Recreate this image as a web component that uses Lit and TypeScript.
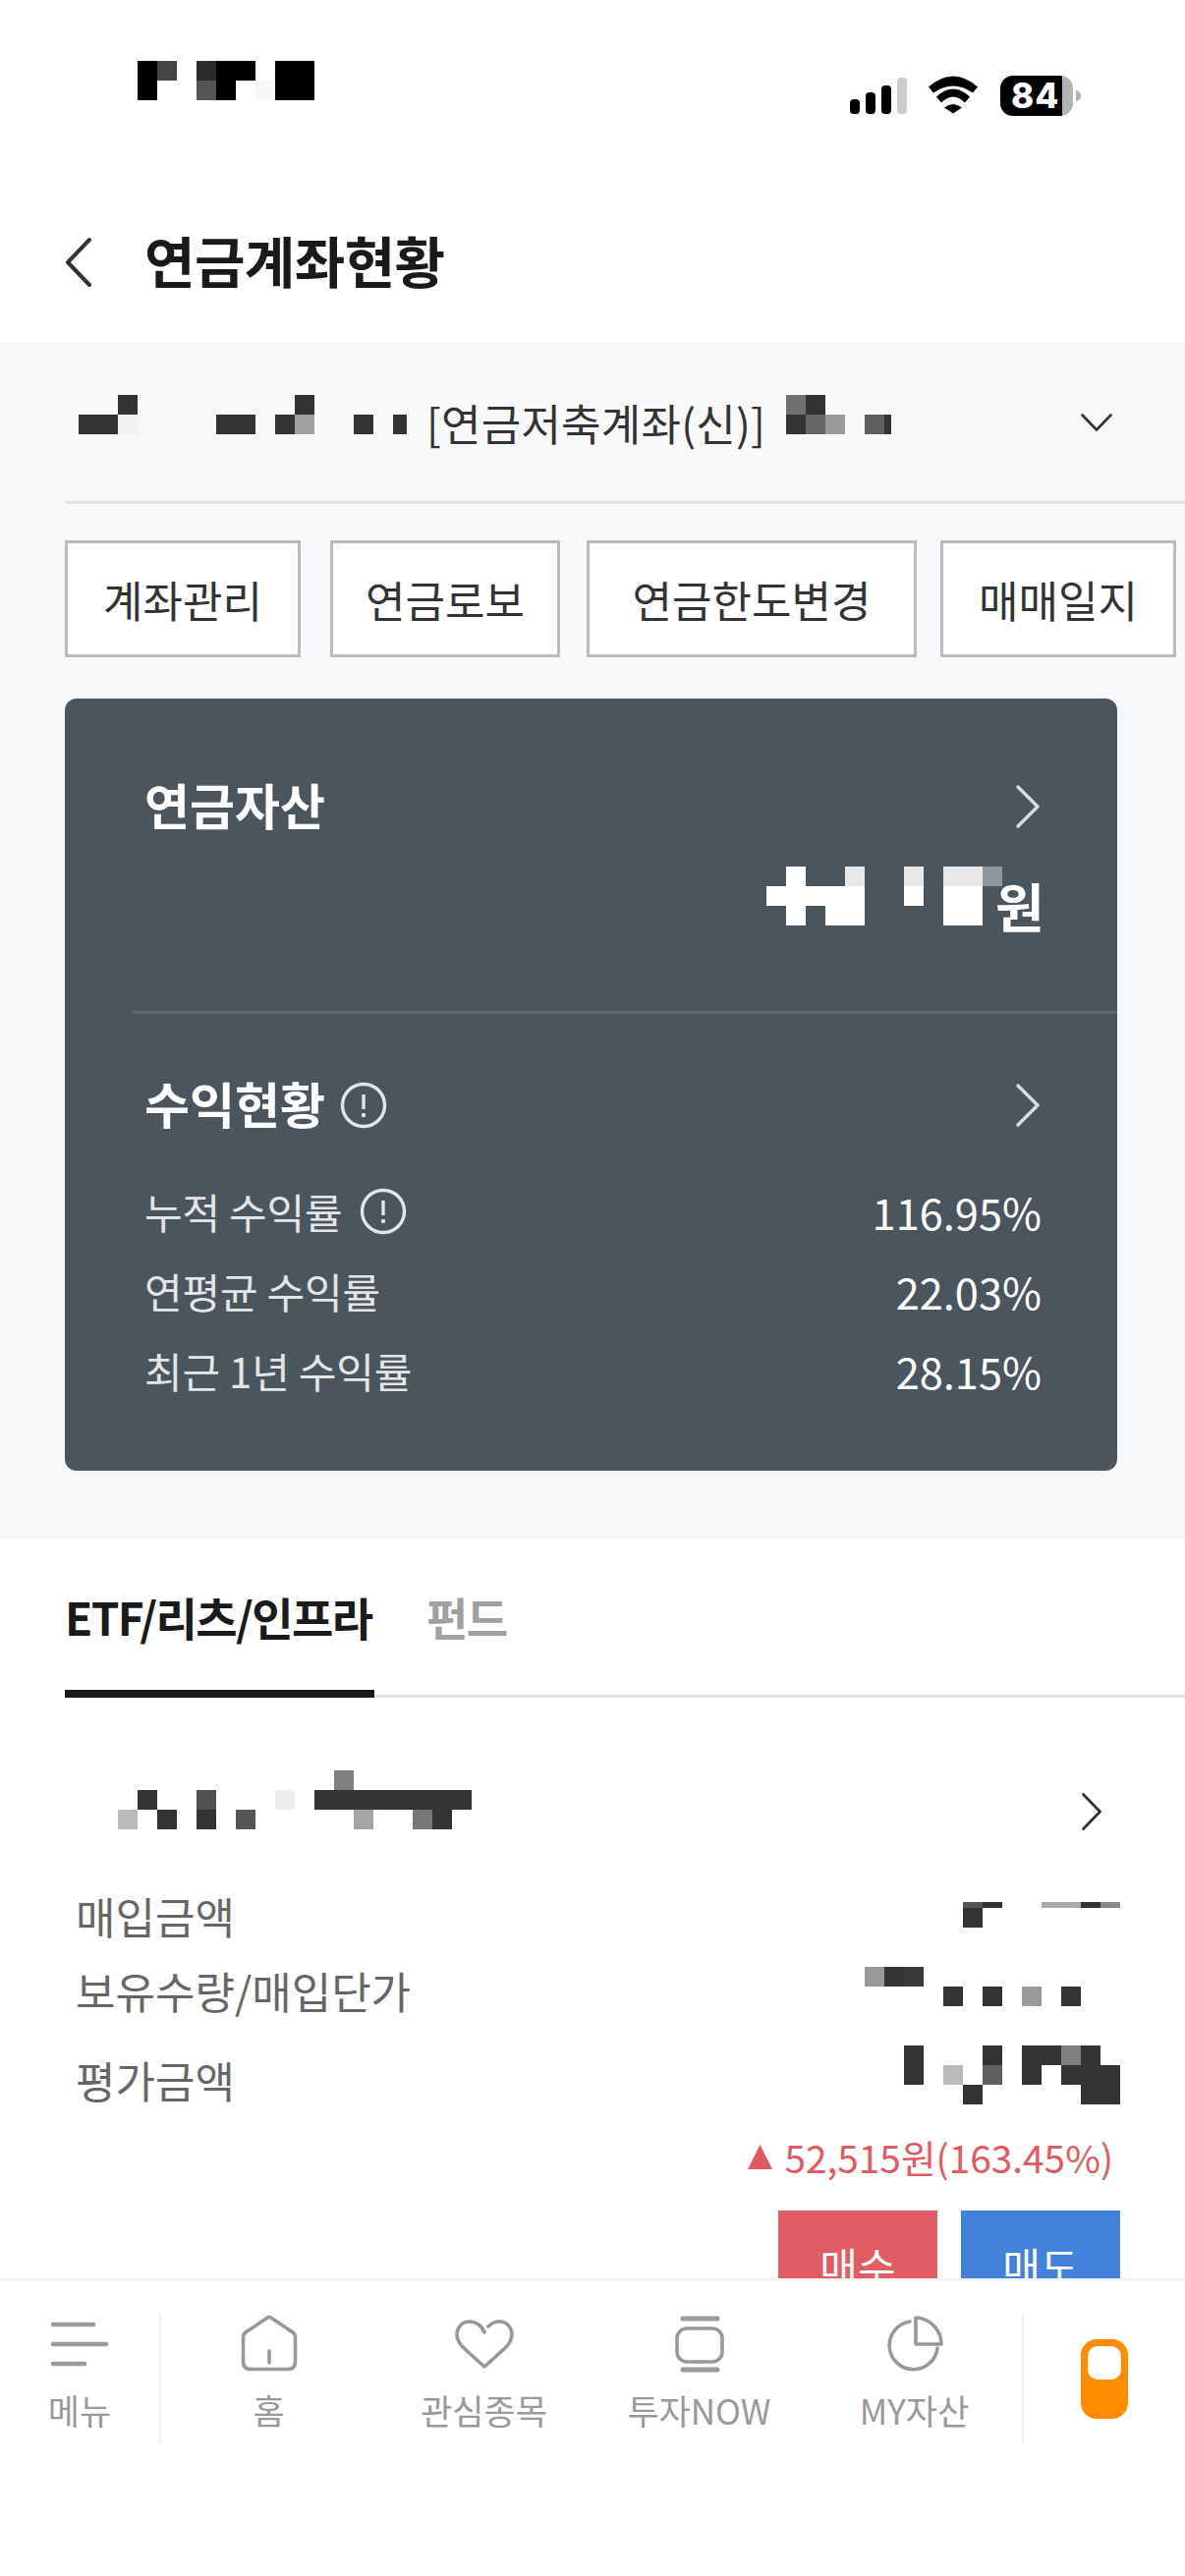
import { LitElement, html, css, svg } from "lit";
import { customElement } from "lit/decorators.js";

type Cell = [number, number, number, string]; // col, row, col span, colour

const D = "#333335";

function mosaic(width: number, height: number, cells: Cell[], unit = 20) {
  return html`<svg class="mosaic" width=${width} height=${height} viewBox="0 0 ${width} ${height}" shape-rendering="crispEdges">
    ${cells.map(([x, y, w, c]) => svg`<rect x=${x * unit} y=${y * unit} width=${w * unit} height=${unit} fill=${c}></rect>`)}
  </svg>`;
}

const chevron = (w: number, h: number, cls: string, d: string, sw = 3) =>
  html`<svg class=${cls} width=${w} height=${h} viewBox="0 0 ${w} ${h}" fill="none" stroke="currentColor" stroke-width=${sw} stroke-linecap="round" stroke-linejoin="round"><path d=${d}></path></svg>`;

const info = (cls: string) =>
  html`<svg class=${cls} width="48" height="48" viewBox="0 0 48 48" fill="none"><circle cx="24" cy="24" r="21.5" stroke="#e3e5e7" stroke-width="3.4"></circle><path d="M24 13v15" stroke="#e3e5e7" stroke-width="3.4"></path><circle cx="24" cy="34" r="2.2" fill="#e3e5e7"></circle></svg>`;

@customElement("app-root")
export class AppRoot extends LitElement {
  static styles = css`
    :host { display: block; width: 1206px; height: 2622px; font-family: "Noto Sans CJK KR", "Noto Sans", sans-serif; }
    * { box-sizing: border-box; }
    .mosaic { display: block; flex: none; }
    .app { width: 1206px; height: 2622px; display: flex; flex-direction: column; overflow: hidden; background: #fff; }
    .scroll { flex: 1; min-height: 0; overflow: hidden; }

    .status { height: 186px; display: flex; padding: 62px 0 0 140px; }
    .status-icons { margin-left: auto; margin-top: 15px; padding-right: 106px; display: flex; align-items: flex-start; }
    .signal { margin: 2px 22px 0 0; }
    .battery { margin-left: 23px; width: 82px; height: 41px; display: flex; align-items: center; }
    .batt-body { width: 74px; height: 41px; border-radius: 13px; background: linear-gradient(90deg, #000 63px, #b3b3b3 63px); color: #fff; font: 800 35px/41px Inter, sans-serif; padding-left: 11px; letter-spacing: 1px; white-space: nowrap; }
    .batt-tip { width: 5px; height: 11px; margin-left: 3px; background: #b3b3b3; border-radius: 0 6px 6px 0; }

    .header { height: 162px; display: flex; align-items: center; padding-left: 66px; color: #333; }
    .header h1 { margin: 0 0 6px 53px; font-size: 56px; line-height: 70px; font-weight: 700; color: #1a1a1a; letter-spacing: -0.6px; }

    .gray { height: 1218px; background: #f7f8fa; }
    .account { height: 165px; margin-left: 66px; padding: 54px 0 0 14px; border-bottom: 3px solid #e1e3e5; display: flex; align-items: flex-start; color: #333; }
    .account .kind { margin-left: 20px; font-size: 44px; line-height: 56px; height: 56px; color: #333; letter-spacing: 0.2px; width: 345px; white-space: nowrap; }
    .account .kind + .mosaic { margin-left: 21px; }
    .account .down { margin: 19px 0 0 193px; }

    .chips { margin: 37px 0 0 66px; display: grid; grid-template-columns: 240px 237px 336px 240px; column-gap: 27px; height: 119px; }
    .chip { border: 3px solid #b7bbbf; background: #fff; display: flex; align-items: center; justify-content: center; font-size: 44px; color: #333; white-space: nowrap; }
    .chip:nth-child(2) { margin-left: 3px; }
    .chip:nth-child(4) { margin: 0 3px 0 -3px; }

    .card { margin: 42px 0 0 66px; width: 1071px; height: 786px; border-radius: 12px; background: #4b555e; color: #fff; overflow: hidden; }
    .sec1 { height: 321px; margin-left: 69px; border-bottom: 3px solid #5d6770; padding: 74px 0 0 12px; }
    .title-row { display: flex; align-items: center; height: 72px; padding-right: 79px; }
    .title-row .t { font-size: 50px; font-weight: 700; line-height: 72px; margin-bottom: 6px; }
    .title-row .go { margin-left: auto; color: #d9dcde; }
    .title-row .i { margin-left: 15px; }
    .amount { display: flex; justify-content: flex-end; padding-right: 79px; margin-top: 25px; }
    .amount .won { font-size: 54px; font-weight: 700; line-height: 60px; margin: 10px 0 0 -7px; width: 45px; white-space: nowrap; }
    .sec2 { padding: 57px 77px 0 81px; }
    .sec2 .title-row { padding-right: 2px; }
    .rate { display: flex; align-items: center; height: 81px; font-size: 42px; color: #e3e5e7; letter-spacing: -0.2px; white-space: nowrap; }
    .rate .i { margin-left: 18px; }
    .rate .v { margin-left: auto; color: #fff; font-size: 43.4px; letter-spacing: 0; }
    .rates { margin-top: 31px; }

    .tabs { margin-left: 66px; height: 162px; border-bottom: 3px solid #dfe3e6; display: flex; }
    .tab { height: 162px; padding-top: 47px; font-size: 46px; line-height: 64px; font-weight: 700; letter-spacing: -1.6px; white-space: nowrap; }
    .tab.on { width: 315px; color: #1a1a1a; border-bottom: 8px solid #1a1a1a; }
    .tab.off { margin-left: 53px; color: #a0a0a0; }

    .item { padding: 74px 85px 0 120px; display: flex; align-items: flex-start; height: 187px; }
    .item .go { margin: 23px 0 0 auto; color: #333; }
    .row { display: flex; justify-content: space-between; align-items: center; padding: 0 66px 6px 77px; font-size: 44px; color: #666; white-space: nowrap; }
    .row .mosaic { align-self: flex-start; }
    .r1 { height: 76px; } .r1 .mosaic { margin-top: 21px; }
    .r2 { height: 76px; } .r2 .mosaic { margin-top: 11px; }
    .r3 { height: 106px; } .r3 .mosaic { margin-top: 15px; }
    .gain { height: 44px; display: flex; align-items: center; justify-content: flex-end; padding-right: 73px; font-size: 38.8px; color: #e25a60; white-space: nowrap; }
    .gain .tri { width: 25px; height: 25px; margin-right: 12px; fill: #e25a60; }
    .trade { margin-top: 33px; padding-right: 66px; display: flex; justify-content: flex-end; gap: 24px; }
    .btn { width: 162px; height: 110px; display: flex; align-items: center; justify-content: center; color: #fff; font-size: 42px; }
    .buy { background: #e25c63; }
    .sell { background: #4382dc; }

    .nav { height: 303px; flex: none; background: #fff; border-top: 3px solid #f3f3f3; padding-top: 33px; }
    .nav-row { height: 132px; display: flex; color: #999; }
    .n-item { display: flex; flex-direction: column; align-items: center; height: 132px; font-size: 35px; line-height: 44px; font-weight: 400; white-space: nowrap; }
    .n-item svg { flex: none; }
    .n-item span { margin-top: 16px; }
    .menu { width: 164px; border-right: 2px solid #efefef; }
    .middle { width: 878px; display: grid; grid-template-columns: repeat(4, 1fr); border-right: 2px solid #efefef; }
    .side { flex: 1; display: flex; align-items: center; justify-content: center; }
    .app-pill { width: 48px; height: 81px; border-radius: 16px; background: #ff8c00; padding: 7px; }
    .app-pill div { height: 34px; border-radius: 10px; background: #fff; }
  `;

  render() {
    const sw = 3.6;
    return html`<div class="app">
      <div class="scroll">
        <div class="status">
          ${mosaic(180, 40, [
            [0, 0, 1, "#000"], [1, 0, 1, "#444"], [3, 0, 1, "#2a2a2a"], [4, 0, 2, "#000"], [7, 0, 2, "#000"],
            [0, 1, 1, "#000"], [3, 1, 1, "#555"], [4, 1, 1, "#000"], [6, 1, 1, "#f7f7f7"], [7, 1, 2, "#000"],
          ])}
          <div class="status-icons">
            <svg class="signal" width="58" height="37" viewBox="0 0 58 37"><rect x="0" y="22" width="10" height="15" rx="4"></rect><rect x="16" y="15" width="10" height="22" rx="4"></rect><rect x="32" y="8" width="10" height="29" rx="4"></rect><rect x="48" y="0" width="10" height="37" rx="4" fill="#ccc"></rect></svg>
            <svg width="50" height="39" viewBox="0 0 50 38"><path d="M0 11Q25-11 50 11L45 17Q25 3 5 17Z"></path><path d="M8 21Q25 5 42 21L37 27Q25 15 13 27Z"></path><path d="M16 32Q25 25 34 32L25 38Z"></path></svg>
            <div class="battery"><div class="batt-body">84</div><div class="batt-tip"></div></div>
          </div>
        </div>

        <div class="header">
          ${chevron(28, 52, "", "M25 3 L3 26 L25 49", 4)}
          <h1>연금계좌현황</h1>
        </div>

        <div class="gray">
          <div class="account">
            ${mosaic(334, 40, [
              [2, 0, 1, D], [11, 0, 1, D],
              [0, 1, 2, D], [2, 1, 1, "#f2f2f2"], [7, 1, 2, D], [10, 1, 1, D], [11, 1, 1, "#a0a0a0"], [14, 1, 1, D], [16, 1, 0.7, D],
            ])}
            <div class="kind">[연금저축계좌(신)]</div>
            ${mosaic(107, 40, [
              [0, 0, 1, "#707070"], [1, 0, 1, D],
              [0, 1, 1, D], [1, 1, 1, "#666"], [2, 1, 1, "#999"], [4, 1, 1, "#5e5e5e"], [5, 1, 0.35, D],
            ])}
            ${chevron(32, 18, "down", "M1.5 1.5 L16 16.5 L30.5 1.5", 2.6)}
          </div>

          <div class="chips">
            <div class="chip">계좌관리</div>
            <div class="chip">연금로보</div>
            <div class="chip">연금한도변경</div>
            <div class="chip">매매일지</div>
          </div>

          <div class="card">
            <div class="sec1">
              <div class="title-row">
                <div class="t">연금자산</div>
                ${chevron(24, 44, "go", "M2 2 L22 22 L2 42", 3.4)}
              </div>
              <div class="amount">
                ${mosaic(240, 60, [
                  [1, 0, 1, "#fff"], [4, 0, 1, "#e8e8e8"], [7, 0, 1, "#e8e8e8"], [9, 0, 2, "#e8e8e8"], [11, 0, 1, "#8f969c"],
                  [0, 1, 5, "#fff"], [7, 1, 1, "#fff"], [9, 1, 2, "#fff"],
                  [1, 2, 1, "#fff"], [3, 2, 2, "#fff"], [9, 2, 2, "#fff"],
                ])}
                <div class="won">원</div>
              </div>
            </div>
            <div class="sec2">
              <div class="title-row">
                <div class="t">수익현황</div>
                ${info("i")}
                ${chevron(24, 44, "go", "M2 2 L22 22 L2 42", 3.4)}
              </div>
              <div class="rates">
                <div class="rate"><span>누적 수익률</span>${info("i")}<span class="v">116.95%</span></div>
                <div class="rate"><span>연평균 수익률</span><span class="v">22.03%</span></div>
                <div class="rate"><span>최근 1년 수익률</span><span class="v">28.15%</span></div>
              </div>
            </div>
          </div>
        </div>

        <div class="tabs">
          <div class="tab on">ETF/리츠/인프라</div>
          <div class="tab off">펀드</div>
        </div>

        <div class="item">
          ${mosaic(360, 60, [
            [11, 0, 1, "#808080"],
            [1, 1, 1, D], [4, 1, 1, "#505050"], [8, 1, 1, "#eee"], [10, 1, 8, D],
            [0, 2, 1, "#bbb"], [2, 2, 1, D], [4, 2, 1, D], [6, 2, 1, "#555"], [12, 2, 1, "#a5a5a5"], [15, 2, 1, "#777"], [16, 2, 1, D],
          ])}
          ${chevron(20, 38, "go", "M1.5 1.5 L18.5 19 L1.5 36.5", 2.8)}
        </div>

        <div class="row r1">
          <span>매입금액</span>
          <svg class="mosaic" width="160" height="26" viewBox="0 0 160 26" shape-rendering="crispEdges"><rect x="0" y="0" width="20" height="6" fill="#555"></rect><rect x="20" y="0" width="20" height="6" fill="#333335"></rect><rect x="0" y="6" width="20" height="20" fill="#333335"></rect><rect x="80" y="0" width="40" height="6" fill="#aaa"></rect><rect x="120" y="0" width="20" height="6" fill="#333335"></rect><rect x="140" y="0" width="20" height="6" fill="#888"></rect></svg>
        </div>
        <div class="row r2">
          <span>보유수량/매입단가</span>
          ${mosaic(260, 40, [
            [0, 0, 1, "#999"], [1, 0, 1, D], [2, 0, 1, "#3a3a3a"],
            [4, 1, 1, D], [6, 1, 1, D], [8, 1, 1, "#999"], [10, 1, 1, D],
          ])}
        </div>
        <div class="row r3">
          <span>평가금액</span>
          ${mosaic(220, 60, [
            [0, 0, 1, D], [4, 0, 1, D], [6, 0, 2, D], [8, 0, 1, "#808080"], [9, 0, 1, D],
            [0, 1, 1, D], [2, 1, 1, "#bbb"], [4, 1, 1, "#606060"], [6, 1, 1, D], [8, 1, 3, D],
            [3, 2, 1, D], [9, 2, 2, D],
          ])}
        </div>
        <div class="gain">
          <svg class="tri" viewBox="0 0 25 25"><path d="M12.5 0L25 25H0Z"></path></svg>
          <span>52,515원(163.45%)</span>
        </div>
        <div class="trade">
          <div class="btn buy">매수</div>
          <div class="btn sell">매도</div>
        </div>
      </div>

      <div class="nav">
        <div class="nav-row">
          <div class="n-item menu">
            <svg width="60" height="60" viewBox="0 0 60 60" fill="none" stroke="#999" stroke-width="4.6" stroke-linecap="round"><path d="M3 11H44M3 31H57M3 51H35"></path></svg>
            <span>메뉴</span>
          </div>
          <div class="middle">
            <div class="n-item">
              <svg width="60" height="60" viewBox="0 0 60 60" fill="none" stroke="#999" stroke-width=${sw} stroke-linecap="round" stroke-linejoin="round"><path d="M27.5 4.5Q30 2.5 32.5 4.5L54 19Q56.5 21 56.5 24V49Q56.5 56.5 49 56.5H11Q3.5 56.5 3.5 49V24Q3.5 21 6 19Z"></path><path d="M30 38V50"></path></svg>
              <span>홈</span>
            </div>
            <div class="n-item">
              <svg width="60" height="60" viewBox="0 0 60 60" fill="none" stroke="#999" stroke-width=${sw} stroke-linecap="round" stroke-linejoin="round"><path d="M30 19C27 11 20 8 15 8C7 8 2 14 2 21.5C2 27 5 31 9 35L30 54L51 35C55 31 58 27 58 21.5C58 14 53 8 45 8C40 8 37 10 34 13"></path></svg>
              <span>관심종목</span>
            </div>
            <div class="n-item">
              <svg width="60" height="60" viewBox="0 0 60 60" fill="none" stroke="#999" stroke-width=${sw} stroke-linecap="round"><rect x="7" y="15" width="46" height="34" rx="10"></rect><path d="M13 5H48" stroke-width="5"></path><path d="M13 57H48" stroke-width="5"></path></svg>
              <span>투자NOW</span>
            </div>
            <div class="n-item">
              <svg width="60" height="60" viewBox="0 0 60 60" fill="none" stroke="#999" stroke-width=${sw} stroke-linecap="round" stroke-linejoin="round"><path d="M25 8A24.5 24.5 0 1 0 53 35"></path><path d="M31 4A27 27 0 0 1 57 31H31Z"></path></svg>
              <span>MY자산</span>
            </div>
          </div>
          <div class="side"><div class="app-pill"><div></div></div></div>
        </div>
      </div>
    </div>`;
  }
}
